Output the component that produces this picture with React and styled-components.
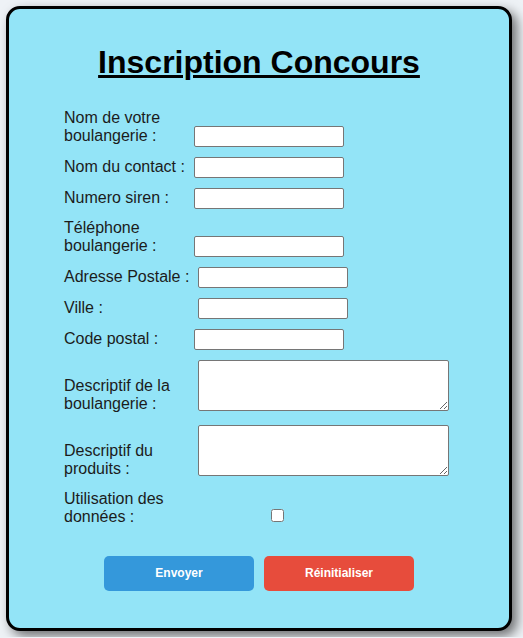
import React from 'react';
import styled, { createGlobalStyle } from 'styled-components';

const GlobalStyle = createGlobalStyle`
  body {
    margin: 0;
    background: #eef2f6;
    font-family: 'Liberation Sans', Arial, sans-serif;
  }
`;

const Card = styled.div`
  box-sizing: border-box;
  width: 506px;
  margin: 6px;
  padding: 34.5px 0 37px;
  background: #93e4f7;
  border: 3px solid #000;
  border-radius: 14px;
  box-shadow: 5px 5px 12px rgba(0, 0, 0, 0.55);
`;

const Title = styled.h1`
  margin: 0;
  font-size: 32px;
  font-weight: bold;
  text-align: center;
  text-decoration: underline;
  color: #000;
`;

const Form = styled.form`
  display: flex;
  flex-direction: column;
  gap: 10px;
  margin-top: 28px;
  padding-left: 55px;
`;

const Row = styled.div`
  display: flex;
  align-items: flex-end;
`;

const Label = styled.label`
  box-sizing: border-box;
  width: ${(p) => p.$width || 130}px;
  padding-bottom: 2px;
  font-size: 16px;
  color: #1c1c1c;
  flex-shrink: 0;
`;

const Input = styled.input`
  box-sizing: border-box;
  width: 150px;
  height: 21px;
  margin: 0;
  padding: 1px 2px;
  background: #fff;
  border: 1px solid #767676;
  border-radius: 2px;
`;

const TextArea = styled.textarea`
  box-sizing: border-box;
  width: 251px;
  height: 51px;
  margin: 0 0 4px;
  padding: 2px;
  background: #fff;
  border: 1px solid #767676;
  border-radius: 2px;
`;

const Check = styled.input`
  width: 13px;
  height: 13px;
  margin: 0 0 6px 77px;
`;

const Actions = styled.div`
  display: flex;
  justify-content: center;
  gap: 10px;
  margin-top: 28px;
`;

const Button = styled.button`
  width: 150px;
  height: 35px;
  border: none;
  border-radius: 5px;
  background: ${(p) => (p.$danger ? '#e74c3c' : '#3498db')};
  color: #fff;
  font-family: 'Liberation Sans', Arial, sans-serif;
  font-size: 12px;
  font-weight: bold;
  cursor: pointer;
`;

const fields = [
  { id: 'nom', label: 'Nom de votre boulangerie :' },
  { id: 'contact', label: 'Nom du contact :' },
  { id: 'siren', label: 'Numero siren :' },
  { id: 'tel', label: 'Téléphone boulangerie :' },
  { id: 'adresse', label: 'Adresse Postale :', width: 134 },
  { id: 'ville', label: 'Ville :', width: 134 },
  { id: 'cp', label: 'Code postal :' },
];

export default function App() {
  return (
    <>
      <GlobalStyle />
      <Card>
        <Title>Inscription Concours</Title>
        <Form onSubmit={(e) => e.preventDefault()}>
          {fields.map((f) => (
            <Row key={f.id}>
              <Label htmlFor={f.id} $width={f.width}>{f.label}</Label>
              <Input id={f.id} type="text" />
            </Row>
          ))}
          <Row>
            <Label htmlFor="desc-boul" $width={134}>Descriptif de la boulangerie :</Label>
            <TextArea id="desc-boul" />
          </Row>
          <Row>
            <Label htmlFor="desc-prod" $width={134}>Descriptif du produits :</Label>
            <TextArea id="desc-prod" />
          </Row>
          <Row>
            <Label htmlFor="rgpd">Utilisation des données :</Label>
            <Check id="rgpd" type="checkbox" />
          </Row>
        </Form>
        <Actions>
          <Button type="submit">Envoyer</Button>
          <Button type="reset" $danger>Réinitialiser</Button>
        </Actions>
      </Card>
    </>
  );
}
